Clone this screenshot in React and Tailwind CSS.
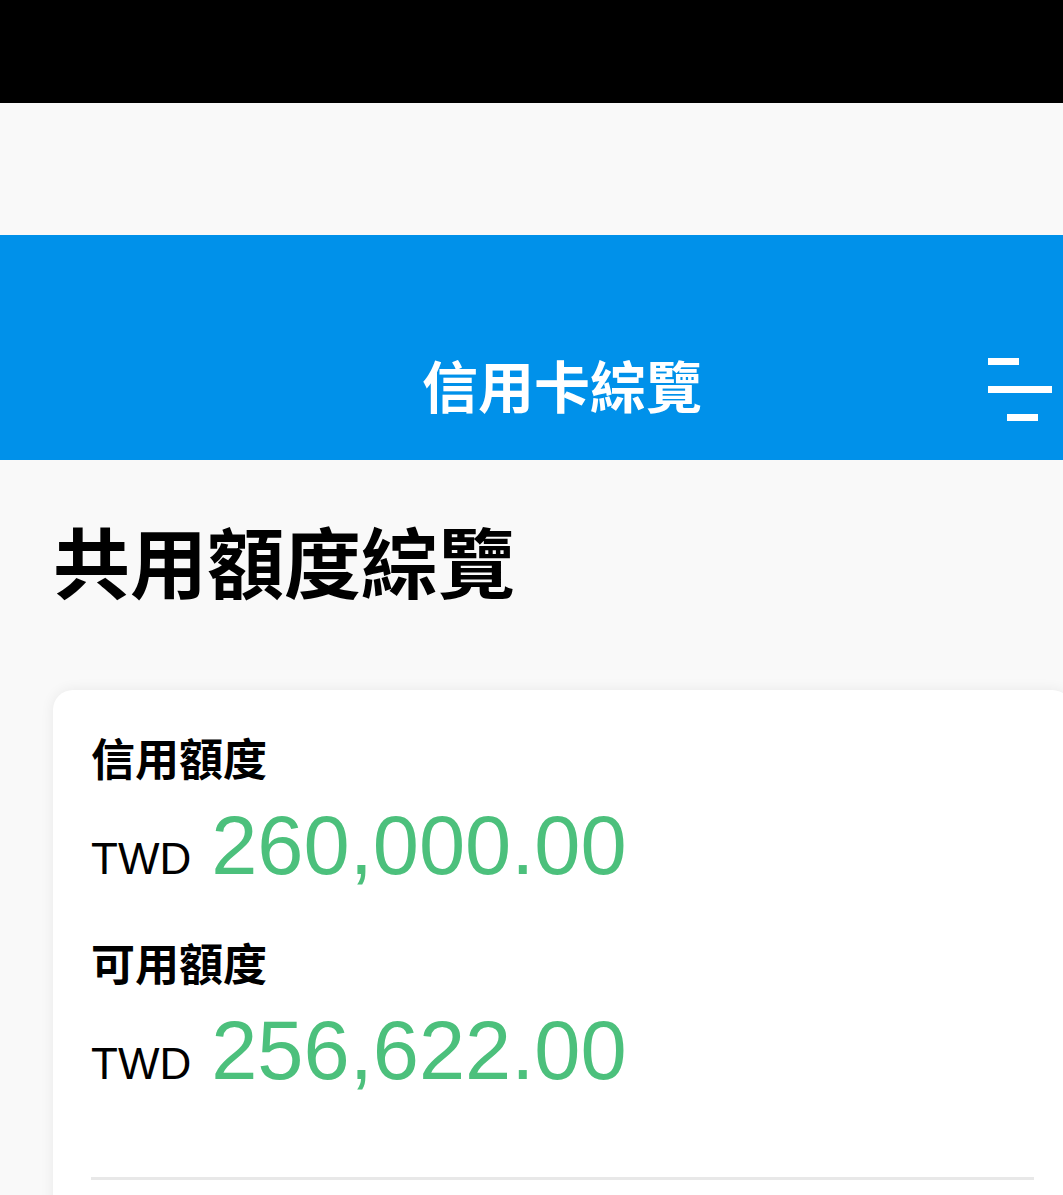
export default function App() {
  const font = { fontFamily: '"Liberation Sans", "Noto Sans CJK TC", sans-serif' };
  return (
    <div className="w-[1063px] h-[1195px] overflow-hidden bg-[#f9f9f9]" style={font}>
      <div className="h-[103px] bg-black" />
      <div className="h-[132px] bg-[#f9f9f9]" />
      <header className="h-[225px] bg-[#0091ea] pt-[80px]">
        <div className="h-[148px] flex items-center pl-[422px] pr-[11px]">
          <h1 className="text-white text-[56px] leading-none font-bold tracking-normal">信用卡綜覽</h1>
          <button className="ml-auto w-[64px] h-[64px] flex flex-col justify-center gap-[21px]">
            <span className="block h-[7px] w-[31px] bg-white" />
            <span className="block h-[7px] w-[64px] bg-white" />
            <span className="block h-[7px] w-[31px] bg-white ml-[19px]" />
          </button>
        </div>
      </header>
      <main className="pl-[53px] pt-[66px]">
        <h2 className="text-[77px] leading-[80px] font-bold text-black">共用額度綜覽</h2>
        <div className="mt-[84px] w-[1019px] bg-white rounded-[20px] shadow-[0_0_14px_rgba(0,0,0,0.07)] px-[38px] pt-[48px] pb-[40px]">
          <div className="text-[44px] leading-[46px] font-bold text-black">信用額度</div>
          <div className="flex items-baseline gap-[20px] h-[92px]">
            <span className="text-[44px] text-black">TWD</span>
            <span className="text-[83px] text-[#4cc07c]">260,000.00</span>
          </div>
          <div className="mt-[67px] text-[44px] leading-[46px] font-bold text-black">可用額度</div>
          <div className="flex items-baseline gap-[20px] h-[92px]">
            <span className="text-[44px] text-black">TWD</span>
            <span className="text-[83px] text-[#4cc07c]">256,622.00</span>
          </div>
          <div className="mt-[96px] h-[3px] bg-[#e8e8e8]" />
          <div className="h-[200px]" />
        </div>
      </main>
    </div>
  );
}
